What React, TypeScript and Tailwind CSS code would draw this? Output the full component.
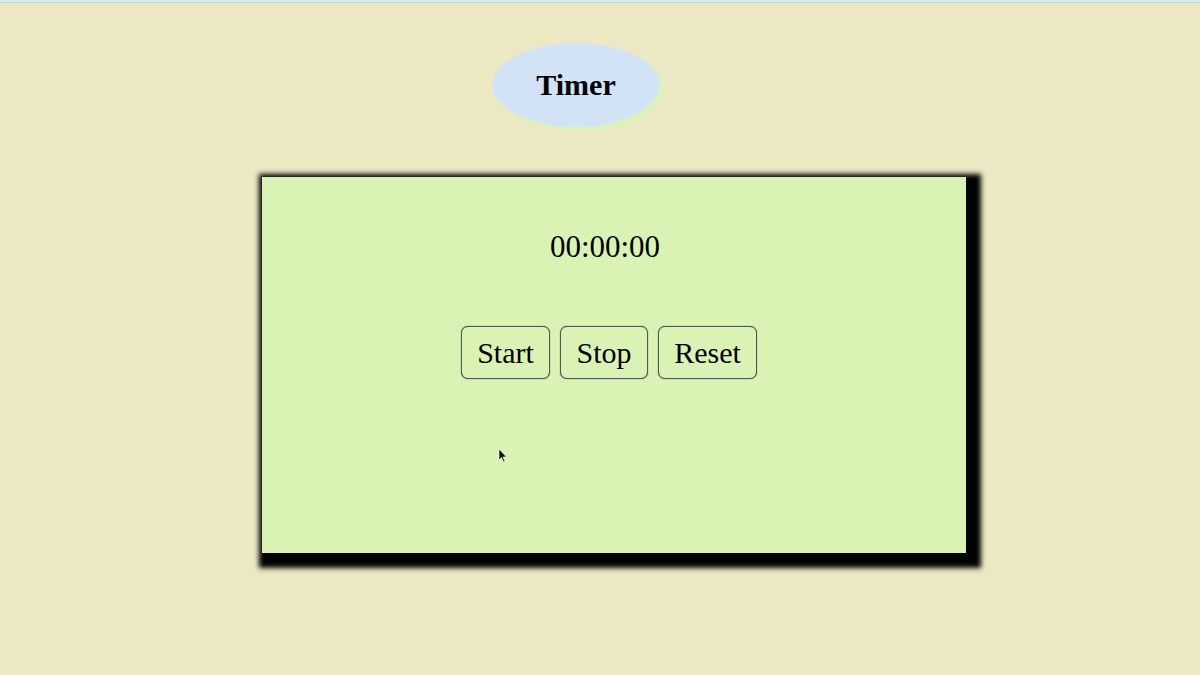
import React from "react";

export default function App() {
  return (
    <div className="relative w-[1200px] h-[675px] overflow-hidden bg-[#ebe8c3]" style={{ fontFamily: '"Liberation Serif", "Times New Roman", serif' }}>
      <div className="h-[3px] bg-[#d6ecef] border-b border-[#b9cfd3]" />
      <div className="flex flex-col items-center">
        <div className="mt-[40px] ml-[-48px] w-[168px] h-[84px] rounded-[50%] bg-[#d3e3f6] shadow-[5px_4px_0_0_#dcf2b6] flex items-center justify-center">
          <span className="text-[30px] font-bold text-black leading-none">Timer</span>
        </div>
        <div className="mt-[50px] ml-[28px] w-[704px] h-[376px] bg-[#d9f3b4] shadow-[6px_6px_5px_9px_#000] flex flex-col items-center">
          <div className="mt-[52px] ml-[-18px] text-[31px] leading-[36px] text-black">00:00:00</div>
          <div className="mt-[61px] ml-[-10px] flex gap-[10px]">
            <button className="h-[53px] w-[89px] rounded-[7px] border border-[#555] bg-[#d9f3b4] text-[30px] text-black leading-none shadow-[0_0_1px_#333]">Start</button>
            <button className="h-[53px] w-[88px] rounded-[7px] border border-[#555] bg-[#d9f3b4] text-[30px] text-black leading-none shadow-[0_0_1px_#333]">Stop</button>
            <button className="h-[53px] w-[99px] rounded-[7px] border border-[#555] bg-[#d9f3b4] text-[30px] text-black leading-none shadow-[0_0_1px_#333]">Reset</button>
          </div>
        </div>
      </div>
      <svg className="absolute left-[498px] top-[448px]" width="10" height="16" viewBox="0 0 10 16">
        <path d="M1 1 L1 12 L3.5 9.5 L5.5 14 L7 13.3 L5 9 L8.5 9 Z" fill="#111" stroke="#fff" strokeWidth="0.6" />
      </svg>
    </div>
  );
}
